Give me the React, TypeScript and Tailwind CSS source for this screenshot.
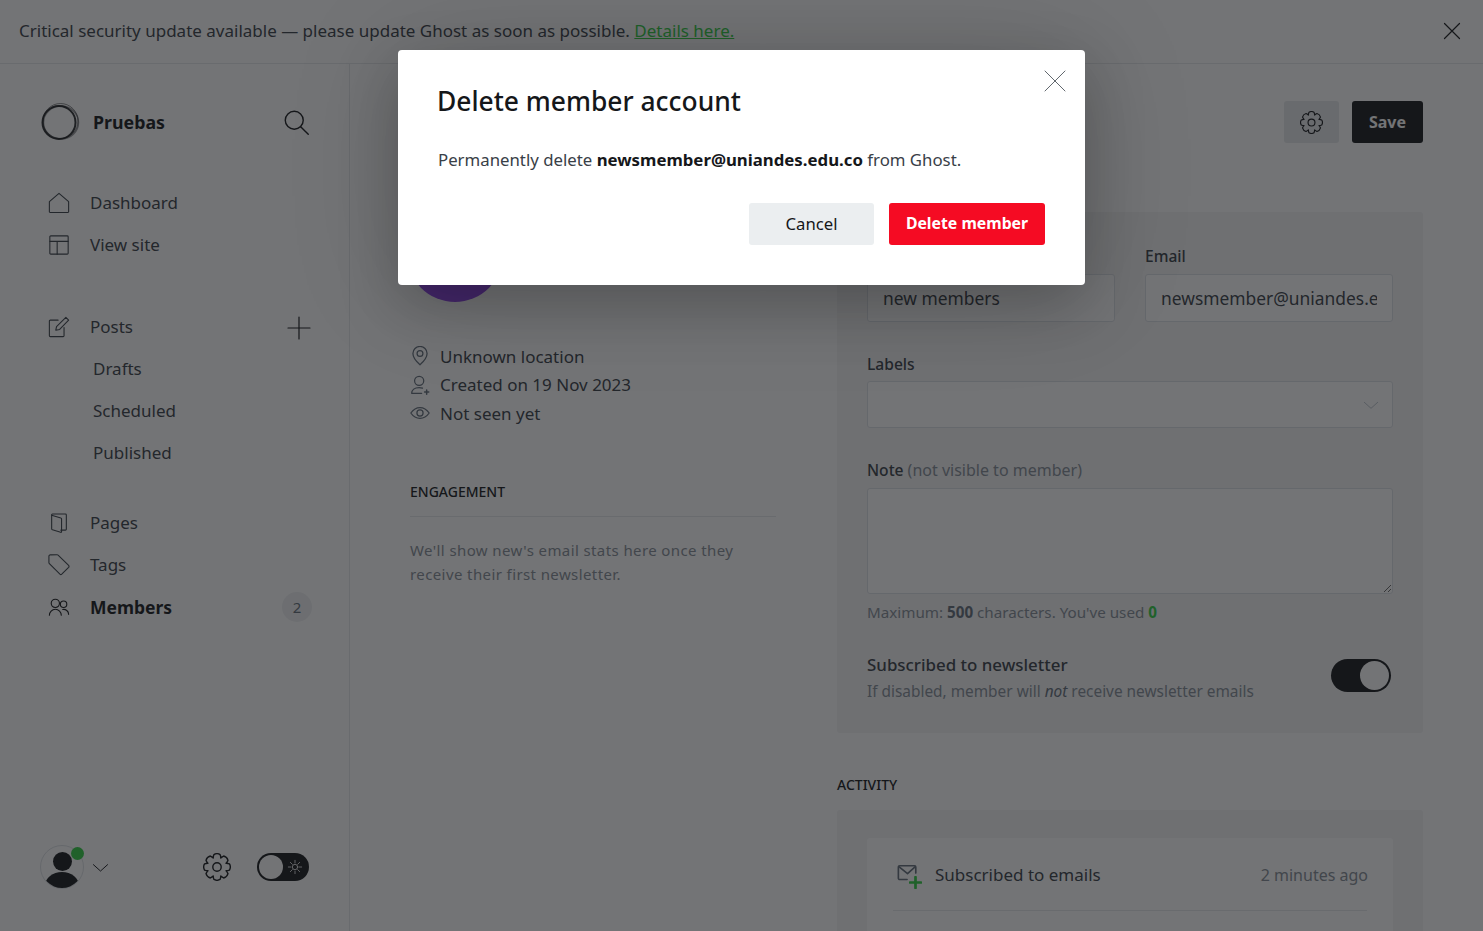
import type { ReactNode } from "react";

function Icon({ children, className = "" }: { children: ReactNode; className?: string }) {
  return (
    <svg viewBox="0 0 24 24" fill="none" stroke="currentColor" strokeWidth="1.2" strokeLinecap="round" strokeLinejoin="round" className={className}>
      {children}
    </svg>
  );
}

// scalloped 8 tooth outline for the settings icon
const gearPath = (() => {
  let d = "";
  for (let i = 0; i < 8; i++) {
    const a = ((i * 45 - 22.5) * Math.PI) / 180;
    const b = ((i * 45 + 22.5) * Math.PI) / 180;
    const m = (i * 45 * Math.PI) / 180;
    const pt = (ang: number, r: number) => `${(12 + r * Math.cos(ang)).toFixed(2)} ${(12 + r * Math.sin(ang)).toFixed(2)}`;
    const l = m - 0.24;
    const h = m + 0.24;
    if (i === 0) d += `M${pt(a, 8.4)}`;
    d += ` Q${pt(l - 0.12, 9.4)} ${pt(l, 11)} Q${pt(m, 12.2)} ${pt(h, 11)} Q${pt(h + 0.12, 9.4)} ${pt(b, 8.4)}`;
  }
  return d + "z";
})();

const Gear = ({ className = "" }: { className?: string }) => (
  <Icon className={className}>
    <path d={gearPath} />
    <circle cx="12" cy="12" r="3.6" />
  </Icon>
);

function NavItem({ icon, label, bold, extra }: { icon?: ReactNode; label: string; bold?: boolean; extra?: ReactNode }) {
  return (
    <div className="flex h-[42px] items-center">
      <div className="flex w-[43px] shrink-0 pl-[1px] text-[#394047]">{icon}</div>
      <span className={bold ? "text-[17.5px] font-bold text-[#15171a]" : "text-[#394047]"}>{label}</span>
      <div className="ml-auto">{extra}</div>
    </div>
  );
}

function SubItem({ label }: { label: string }) {
  return <div className="flex h-[42px] items-center pl-[46px] text-[#394047]">{label}</div>;
}

function Meta({ icon, label }: { icon: ReactNode; label: string }) {
  return (
    <div className="flex h-[28.5px] items-center gap-[10px] text-[#394047]">
      <div className="w-5 shrink-0 text-[#626d79]">{icon}</div>
      {label}
    </div>
  );
}

function Sidebar() {
  return (
    <aside className="flex h-full w-[350px] shrink-0 flex-col border-r border-[#e6e9eb] pl-[40px] pr-[38px] pt-[36px] pb-[42px]">
      <div className="flex h-[44px] items-center">
        <svg viewBox="0 0 40 40" fill="none" stroke="#15171a" className="h-[40px] w-[40px]">
          <circle cx="19" cy="20.500" r="16.500" strokeWidth="2" opacity="0.9" />
          <circle cx="20.500" cy="19" r="17.500" strokeWidth="1" opacity="0.5" />
          <ellipse cx="21" cy="20.500" rx="17.500" ry="16.500" strokeWidth="1.500" opacity="0.45" />
        </svg>
        <span className="ml-[13px] text-[17.8px] font-bold text-[#15171a]">Pruebas</span>
        <Icon className="ml-auto mr-[1px] h-7 w-7 text-[#15171a]">
          <circle cx="10.500" cy="10.500" r="7.700" />
          <path d="m16 16 6.500 6.500" />
        </Icon>
      </div>
      <nav className="mt-[38px] pl-[7px]">
        <NavItem
          label="Dashboard"
          icon={
            <Icon className="h-[22px] w-[22px]">
              <path d="M1.500 21.500v-11L12 1.500l10.500 9v11a.8.8 0 0 1-.8.8H2.300a.8.8 0 0 1-.8-.8z" />
            </Icon>
          }
        />
        <NavItem
          label="View site"
          icon={
            <Icon className="h-[22px] w-[22px]">
              <rect x="2" y="2" width="20" height="20" rx="1" />
              <path d="M2 8h20M10 8v14" />
            </Icon>
          }
        />
        <div className="h-[40px]" />
        <NavItem
          label="Posts"
          icon={
            <Icon className="h-[22px] w-[22px]">
              <path d="M11 4.500H2.500a1 1 0 0 0-1 1v16a1 1 0 0 0 1 1h14a1 1 0 0 0 1-1v-9" />
              <path d="m8.500 15.500.8-4L19.500 1.500l3 3-9.800 10.200z" />
            </Icon>
          }
          extra={
            <Icon className="mt-[2px] h-6 w-6 text-[#15171a]">
              <path d="M12 1v22M1 12h22" />
            </Icon>
          }
        />
        <SubItem label="Drafts" />
        <SubItem label="Scheduled" />
        <SubItem label="Published" />
        <div className="h-[28px]" />
        <NavItem
          label="Pages"
          icon={
            <Icon className="h-[22px] w-[22px]">
              <path d="M4 3.500 14 6.500a1 1 0 0 1 .8 1v14a.7.7 0 0 1-1 .6L4.800 19.400a1 1 0 0 1-.8-1z" />
              <path d="M4 3.500a1 1 0 0 1 1-1.300h14a1 1 0 0 1 1 1v15.600a1 1 0 0 1-1 1h-5" />
            </Icon>
          }
        />
        <NavItem
          label="Tags"
          icon={
            <Icon className="h-[22px] w-[22px]">
              <path d="M1 2.500V9.500a1.500 1.500 0 0 0 .5 1L13 22a1.500 1.500 0 0 0 2 0l7.500-7.500a1.500 1.500 0 0 0 0-2L11 1.300a1.500 1.500 0 0 0-1-.4H2.500A1.500 1.500 0 0 0 1 2.500z" />
            </Icon>
          }
        />
        <NavItem
          label="Members"
          bold
          icon={
            <Icon className="h-[22px] w-[22px] text-[#15171a]">
              <circle cx="8" cy="8" r="4.500" />
              <path d="M1.500 21a6.500 6.500 0 0 1 13 0" />
              <circle cx="17" cy="9" r="3.500" />
              <path d="M16 14.700a5.500 5.500 0 0 1 6.500 5.300" />
            </Icon>
          }
          extra={
            <div className="-mr-[1px] flex h-[30px] w-[30px] items-center justify-center rounded-full bg-[#eff1f2] text-[15px] text-[#626d79]">2</div>
          }
        />
      </nav>
      <div className="mt-auto flex items-center">
        <div className="relative h-[44px] w-[44px] overflow-hidden rounded-full border border-[#dde1e5]">
          <div className="mx-auto mt-[6px] h-[19px] w-[19px] rounded-full bg-[#15171a]" />
          <div className="mx-auto mt-[1px] h-[28px] w-[34px] rounded-[50%] bg-[#15171a]" />
        </div>
        <div className="relative -ml-[13px] -mt-[27px] h-[13px] w-[13px] rounded-full bg-[#30cf43]" />
        <Icon className="ml-[8px] h-[17px] w-[17px] text-[#15171a]">
          <path d="m2 8 10 9 10-9" strokeWidth="1.400" />
        </Icon>
        <Gear className="ml-auto h-[28px] w-[28px] text-[#15171a]" />
        <div className="ml-[26px] mr-[2px] flex h-[28px] w-[52px] items-center rounded-full bg-[#15171a] pl-[2px]">
          <div className="h-[24px] w-[24px] rounded-full bg-white" />
          <Icon className="ml-[4px] h-4 w-4 text-white">
            <circle cx="12" cy="12" r="4" />
            <path d="M12 2v4M12 18v4M2 12h4M18 12h4M5 5l3 3M16 16l3 3M5 19l3-3M16 8l3-3" />
          </Icon>
        </div>
      </div>
    </aside>
  );
}

function Field({ label, children, className = "" }: { label: ReactNode; children: ReactNode; className?: string }) {
  return (
    <div className={className}>
      <div className="mb-[5px] h-[24px] text-[15.6px] font-medium leading-[24px] text-[#394047]">{label}</div>
      {children}
    </div>
  );
}

const inputClass = "mt-[1px] h-[48px] w-full rounded-[3px] border border-[#dde1e5] bg-white px-[15px] text-[17.400px] text-[#394047] outline-none";

function Main() {
  return (
    <main className="min-w-0 flex-1 overflow-hidden pl-[60px] pr-[60px] pt-[37px]">
      <div className="flex h-[42px] justify-end gap-[13px]">
        <div className="flex w-[55px] items-center justify-center rounded-[3px] bg-[#e6e9eb] text-[#15171a]">
          <Gear className="h-[23px] w-[23px]" />
        </div>
        <div className="flex w-[71px] items-center justify-center rounded-[3px] bg-[#15171a] text-[16px] font-bold text-white">Save</div>
      </div>
      <div className="mt-[69px] flex gap-[61px]">
        <section className="w-[366px] shrink-0">
          <div className="flex h-[90px] items-start">
            <div className="-ml-[3px] -mt-[6px] h-[96px] w-[96px] shrink-0 rounded-full bg-[#8e42e8]" />
          </div>
          <div className="mt-[40px]">
            <Meta
              label="Unknown location"
              icon={
                <Icon className="h-5 w-5">
                  <path d="M12 22.500s8.500-7.500 8.500-13.500a8.500 8.500 0 0 0-17 0c0 6 8.500 13.500 8.500 13.500z" strokeWidth="1.500" />
                  <circle cx="12" cy="9" r="3.500" strokeWidth="1.500" />
                </Icon>
              }
            />
            <Meta
              label="Created on 19 Nov 2023"
              icon={
                <Icon className="h-5 w-5">
                  <circle cx="11" cy="7" r="5.500" strokeWidth="1.500" />
                  <path d="M15 15.800c-1.200-.5-2.500-.8-4-.8-5.500 0-9 3-9 7h12" strokeWidth="1.500" />
                  <path d="M20 18v5M17.500 20.500h5" strokeWidth="1.800" />
                </Icon>
              }
            />
            <Meta
              label="Not seen yet"
              icon={
                <Icon className="h-5 w-5">
                  <path d="M1 12S5.500 5.500 12 5.500 23 12 23 12 18.500 18.500 12 18.500 1 12 1 12z" strokeWidth="1.500" />
                  <circle cx="12" cy="12" r="3.700" strokeWidth="1.500" />
                </Icon>
              }
            />
          </div>
          <div className="mt-[54px] border-b border-[#e6e9eb] pb-[14px] text-[14px] font-medium leading-[20px] text-[#15171a]">ENGAGEMENT</div>
          <p className="mt-[21px] text-[15px] leading-[24px] tracking-[0.4px] text-[#858d96]">
            We'll show new's email stats here once they receive their first newsletter.
          </p>
        </section>
        <section className="w-[586px] shrink-0">
          <div className="rounded-[3px] bg-[#f4f5f6] px-[30px] pt-[32px] pb-[29px]">
            <div className="grid grid-cols-2 gap-[30px]">
              <Field label="Name">
                <input readOnly defaultValue="new members" className={inputClass} />
              </Field>
              <Field label="Email">
                <input readOnly defaultValue="newsmember@uniandes.edu.co" className={inputClass} />
              </Field>
            </div>
            <Field label="Labels" className="mt-[30px]">
              <div className="flex h-[47px] items-center justify-end rounded-[3px] border border-[#dde1e5] bg-white pr-[13px] text-[#abb4be]">
                <Icon className="h-4 w-4">
                  <path d="m2 8 10 9 10-9" />
                </Icon>
              </div>
            </Field>
            <Field
              label={
                <>
                  Note <span className="text-[16px] font-normal text-[#858d96]">(not visible to member)</span>
                </>
              }
              className="mt-[30px]"
            >
              <div className="pt-[1px]">
                <textarea readOnly className="block h-[106px] w-full resize-y rounded-[3px] border border-[#dde1e5] bg-white outline-none" />
              </div>
            </Field>
            <p className="mt-[7px] text-[15.200px] leading-[22px] text-[#858d96]">
              Maximum: <b className="text-[#626d79]">500</b> characters. You've used <b className="text-[#30cf43]">0</b>
            </p>
            <div className="mt-[29px] flex items-start justify-between">
              <div>
                <div className="text-[16.900px] font-medium leading-[26px] text-[#394047]">Subscribed to newsletter</div>
                <div className="mt-[2px] text-[15.400px] leading-[24px] text-[#858d96]">
                  If disabled, member will <i className="text-[#626d79]">not</i> receive newsletter emails
                </div>
              </div>
              <div className="mr-[2px] mt-[7px] flex h-[33px] w-[60px] items-center justify-end rounded-full bg-[#15171a] pr-[2px]">
                <div className="h-[29px] w-[29px] rounded-full bg-white" />
              </div>
            </div>
          </div>
          <div className="mt-[42px] text-[14px] font-medium leading-[20px] text-[#15171a]">ACTIVITY</div>
          <div className="mt-[15px] rounded-[3px] bg-[#f4f5f6] px-[30px] pt-[28px]">
            <div className="h-[200px] rounded-[3px] bg-white px-[26px]">
              <div className="flex h-[73px] items-center border-b border-[#e6e9eb] pl-[4px] pt-[2px]">
                <div className="relative h-6 w-6 text-[#626d79]">
                  <Icon className="h-[22px] w-[22px]">
                    <path d="M11 18H3a1.500 1.500 0 0 1-1.500-1.500v-12A1.500 1.500 0 0 1 3 3h16a1.500 1.500 0 0 1 1.500 1.500V11" strokeWidth="1.800" />
                    <path d="m2 4 9.500 7.500L20 4" strokeWidth="1.800" />
                  </Icon>
                  <Icon className="absolute -bottom-[2px] -right-[1px] h-[13px] w-[13px] text-[#30cf43]">
                    <path d="M12 2v20M2 12h20" strokeWidth="5" />
                  </Icon>
                </div>
                <span className="ml-[14px] text-[#394047]">Subscribed to emails</span>
                <span className="-mr-[1px] ml-auto text-[16px] text-[#858d96]">2 minutes ago</span>
              </div>
            </div>
          </div>
        </section>
      </div>
    </main>
  );
}

function DeleteModal() {
  return (
    <div className="absolute inset-0 flex justify-center bg-[#15171a]/60 pt-[50px]">
      <div className="relative h-[235px] w-[687px] rounded-[4px] bg-white px-[40px] pt-[32px] text-[#394047] shadow-[0_20px_60px_rgba(0,0,0,0.22),0_0_120px_rgba(0,0,0,0.12)]">
        <h1 className="-ml-px text-[26.400px] font-medium leading-[38px] text-[#15171a]">Delete member account</h1>
        <p className="mt-[27px] text-[16.800px] leading-[26px]">
          Permanently delete <b className="text-[#15171a]">newsmember@uniandes.edu.co</b> from Ghost.
        </p>
        <div className="mt-[30px] flex justify-end gap-[15px]">
          <button className="h-[42px] w-[125px] rounded-[3px] bg-[#ebeef0] text-[16.700px] text-[#15171a]">Cancel</button>
          <button className="h-[42px] w-[156px] rounded-[3px] bg-[#f50b23] text-[15.800px] font-bold text-white">Delete member</button>
        </div>
        <Icon className="absolute right-[18px] top-[19px] h-6 w-6 text-[#394047]">
          <path d="m2 2 20 20M22 2 2 22" strokeWidth="0.800" />
        </Icon>
      </div>
    </div>
  );
}

export default function App() {
  return (
    <div className="relative flex h-[931px] flex-col overflow-hidden bg-white font-['Noto_Sans',sans-serif] text-[17px]">
      <div className="flex h-[64px] shrink-0 items-center border-b border-[#e6e9eb] pb-[2px] pl-[19px] pr-[22px] text-[#394047]">
        <span>
          Critical security update available — please update Ghost as soon as possible.{" "}
          <span className="text-[#30cf43] underline">Details here.</span>
        </span>
        <Icon className="ml-auto h-[18px] w-[18px] text-[#15171a]">
          <path d="m2 2 20 20M22 2 2 22" strokeWidth="1.600" />
        </Icon>
      </div>
      <div className="flex min-h-0 flex-1">
        <Sidebar />
        <Main />
      </div>
      <DeleteModal />
    </div>
  );
}
